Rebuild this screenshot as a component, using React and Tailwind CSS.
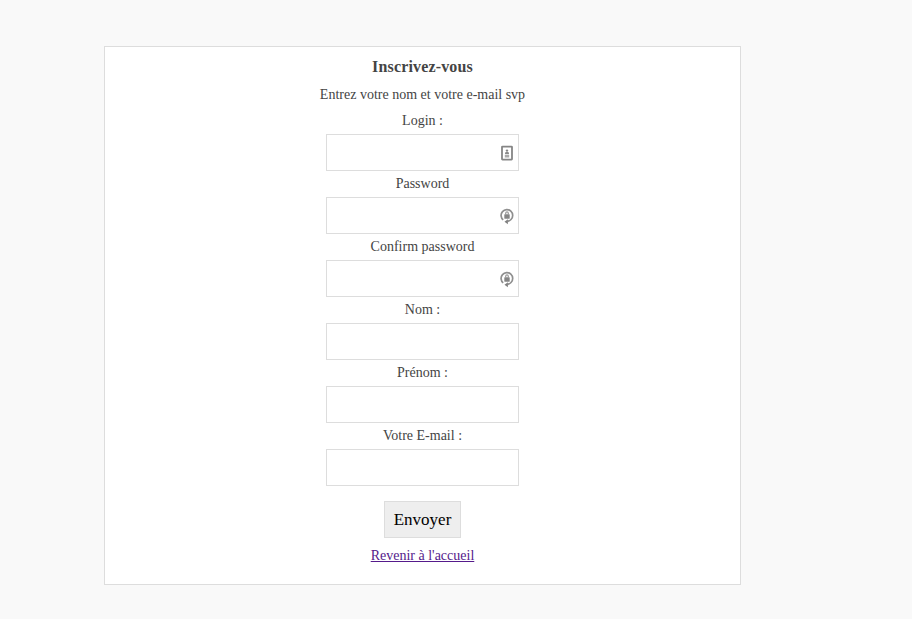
const fields = [
  { label: 'Login :', icon: 'card', type: 'text' },
  { label: 'Password', icon: 'lock', type: 'password' },
  { label: 'Confirm password', icon: 'lock', type: 'password' },
  { label: 'Nom :', type: 'text' },
  { label: 'Prénom :', type: 'text' },
  { label: 'Votre E-mail :', type: 'email' },
];

function CardIcon() {
  return (
    <svg className="h-[18px] w-4" viewBox="0 0 16 18" fill="none">
      <rect x="3" y="2.6" width="10" height="13" rx="0.5" stroke="#858585" strokeWidth="1.8" />
      <circle cx="8" cy="6.6" r="1.2" fill="#858585" />
      <path d="M6 10.2V9.4q0-1.4 1.2-1.4h1.6q1.2 0 1.2 1.4v.8z" fill="#8b8b8b" />
      <path d="M5.8 11.6h4.4M5.8 12.9h4.4" stroke="#aaa" strokeWidth="1.2" />
    </svg>
  );
}

function LockIcon() {
  return (
    <svg className="h-[18px] w-4" viewBox="0 0 16 18" fill="none">
      <path d="M4.2 12.9A5.8 5.8 0 1 1 12 12.5Q10.6 13.9 8.4 14.6" stroke="#8f8f8f" strokeWidth="1.7" />
      <path d="M8.9 12.2v5l-3.4-2.5z" fill="#808080" />
      <rect x="5.3" y="7.3" width="5.4" height="4.4" rx="0.4" fill="#858585" />
      <path d="M6.7 7.6V6.2a1.3 1.3 0 0 1 2.6 0V7.6" stroke="#999" strokeWidth="1.2" />
    </svg>
  );
}

export default function App() {
  return (
    <main className="h-[619px] bg-[#f9f9f9] pt-[46px] pl-[104px] font-['Liberation_Serif',serif] text-sm text-[#444]">
      <form className="flex h-[539px] w-[637px] flex-col items-center border border-[#ddd] bg-white pt-[7px]">
        <h1 className="h-7 text-base leading-[26px] font-bold tracking-[0.15px]">Inscrivez-vous</h1>
        <p className="leading-[26px]">Entrez votre nom et votre e-mail svp</p>
        {fields.map(({ label, icon, type }) => (
          <label key={label} className="flex flex-col items-center">
            <span className="leading-[26px]">{label}</span>
            <span className="flex h-[37px] w-[193px] items-center border border-[#ddd] bg-white pr-[3px]">
              <input type={type} className="h-full min-w-0 flex-1 pl-2 outline-none" />
              {icon === 'card' && <CardIcon />}
              {icon === 'lock' && <LockIcon />}
            </span>
          </label>
        ))}
        <button type="button" className="mt-[15px] h-[37px] w-[77px] border border-[#ddd] bg-[#eee] pt-0.5 text-[17px] text-black">
          Envoyer
        </button>
        <a href="#accueil" className="mt-[5px] leading-[26px] text-[#551a8b] underline">Revenir à l'accueil</a>
      </form>
    </main>
  );
}
